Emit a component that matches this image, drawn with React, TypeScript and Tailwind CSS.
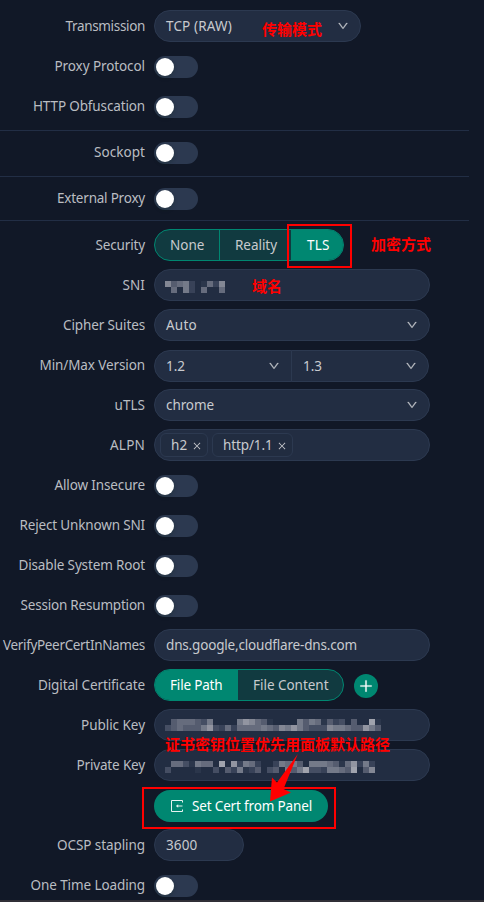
import { useLayoutEffect, useRef, useState, type ReactNode } from "react";
import { AiOutlineClose, AiOutlineDown, AiOutlinePlus } from "react-icons/ai";

/* Text set to a known advance width by spreading the difference over its letters. */
function Fit({ text, width }: { text: string; width: number }) {
  const ref = useRef<HTMLSpanElement>(null);
  const [spacing, setSpacing] = useState(0);
  useLayoutEffect(() => {
    if (ref.current) {
      const natural = ref.current.getBoundingClientRect().width - spacing * text.length;
      setSpacing((width - natural) / text.length);
    }
  }, [text, width]);
  return (
    <span ref={ref} className="inline-block whitespace-nowrap" style={{ letterSpacing: spacing }}>
      {text}
    </span>
  );
}

function Row({ label, width, children }: { label?: string; width?: number; children: ReactNode }) {
  return (
    <div className="flex h-10 shrink-0 items-center">
      <div className="mr-[9px] flex w-[145px] shrink-0 justify-end text-[#babdc2]">
        {label && <Fit text={label} width={width ?? 0} />}
      </div>
      {children}
    </div>
  );
}

const Switch = () => (
  <div className="mt-0.5 flex h-[22px] w-11 items-center rounded-full bg-[#2c3950] pl-0.5">
    <div className="size-[18px] rounded-full bg-white shadow-[0_2px_4px_rgba(0,35,11,0.2)]" />
  </div>
);

const SwitchRow = ({ label, width }: { label: string; width: number }) => (
  <Row label={label} width={width}>
    <Switch />
  </Row>
);

const Divider = ({ className }: { className: string }) => (
  <div className={`h-px w-[469px] shrink-0 bg-[#222e45] ${className}`} />
);

function Box({ className = "w-[276px] rounded-full", children }: { className?: string; children?: ReactNode }) {
  return (
    <div className={`flex h-8 shrink-0 items-center border border-[#2c3950] bg-[#222d42] px-[11px] ${className}`}>
      {children}
    </div>
  );
}

const Down = () => <AiOutlineDown size={12} strokeWidth={25} className="ml-auto text-[#bdc0c6]" />;

/* Panel open on its right side with an arrow entering it. */
const ImportIcon = () => (
  <svg width="12" height="12" viewBox="0 0 12 12" fill="none" stroke="currentColor" className="mr-[9px] opacity-90">
    <path d="M11.5 2.5V0.5H0.5V11.5H11.5V9.5" />
    <path d="M11.5 6H6" />
    <path d="M7.2 4.2V7.8L4.8 6Z" fill="currentColor" stroke="none" />
  </svg>
);

const Tag = ({ text, width, className }: { text: string; width: number; className: string }) => (
  <div className={`flex h-6 shrink-0 items-center rounded-md border border-[#2c3950] bg-[#212c40] pl-2.5 ${className}`}>
    <Fit text={text} width={width} />
    <AiOutlineClose size={10} className="ml-[4px] mt-0.5" />
  </div>
);

const tones = [
  "none", "#2b364b", "#384258", "#454e63", "#555c6f", "#666c7d", "#747a89", "#838794", "#9295a1", "#a0a3ad",
];

function Mosaic({ rows, className }: { rows: string[]; className: string }) {
  return (
    <svg width={rows[0].length * 6} height="12" className={`-ml-px shrink-0 ${className}`} shapeRendering="crispEdges">
      {rows.map((row, y) =>
        row.split("").map((tone, x) => (
          <rect key={`${x}-${y}`} x={x * 6} y={y * 6} width="6" height="6" fill={tones[Number(tone)]} />
        )),
      )}
    </svg>
  );
}

const red = "absolute whitespace-nowrap text-[15px] leading-5 font-bold text-[#ff0000] font-['Noto_Sans_CJK_SC',sans-serif]";

export default function App() {
  return (
    <div className="relative flex h-[902px] w-[484px] flex-col overflow-hidden bg-[#111827] pt-1.5 font-['Noto_Sans','Noto_Sans_CJK_SC',sans-serif] text-[13.5px] leading-5 text-[#c8cace]">
      <Row label="Transmission" width={79.5}>
        <Box className="w-[207px] rounded-full">
          <Fit text="TCP (RAW)" width={66} />
          <Down />
        </Box>
      </Row>
      <SwitchRow label="Proxy Protocol" width={90.5} />
      <SwitchRow label="HTTP Obfuscation" width={112} />
      <Divider className="mt-1 mb-px" />
      <SwitchRow label="Sockopt" width={51} />
      <Divider className="mt-1 mb-px" />
      <SwitchRow label="External Proxy" width={88} />
      <Divider className="mt-0.5 mb-1" />

      <Row label="Security" width={49.5}>
        <div className="flex h-8 w-[190px] overflow-hidden rounded-full border border-[#008771] bg-[#113a40]">
          <div className="flex w-[65px] items-center border-r border-[#008771] pl-[15px]">
            <Fit text="None" width={34.5} />
          </div>
          <div className="flex w-[71px] items-center pl-[15px]">
            <Fit text="Reality" width={42} />
          </div>
          <div className="flex flex-1 items-center bg-[#008771] pl-4 text-white">
            <Fit text="TLS" width={22.5} />
          </div>
        </div>
      </Row>
      <Row label="SNI" width={22.5}>
        <Box>
          <Mosaic className="mt-1" rows={["7456201527", "0506205005"]} />
        </Box>
      </Row>
      <Row label="Cipher Suites" width={82}>
        <Box>
          <Fit text="Auto" width={31} />
          <Down />
        </Box>
      </Row>
      <Row label="Min/Max Version" width={105.5}>
        <div className="mt-0.5 flex">
          <Box className="w-[138px] rounded-l-full">
            <Fit text="1.2" width={19} />
            <Down />
          </Box>
          <Box className="-ml-px w-[138px] rounded-r-full">
            <Fit text="1.3" width={19} />
            <Down />
          </Box>
        </div>
      </Row>
      <Row label="uTLS" width={30.5}>
        <Box>
          <Fit text="chrome" width={48} />
          <Down />
        </Box>
      </Row>
      <Row label="ALPN" width={35}>
        <div className="flex h-8 w-[276px] items-center gap-1 rounded-full border border-[#2c3950] bg-[#222d42] pl-[5px]">
          <Tag text="h2" width={16.5} className="w-12" />
          <Tag text="http/1.1" width={49.5} className="w-[81px]" />
        </div>
      </Row>
      <SwitchRow label="Allow Insecure" width={90.5} />
      <SwitchRow label="Reject Unknown SNI" width={125.5} />
      <SwitchRow label="Disable System Root" width={126.5} />
      <SwitchRow label="Session Resumption" width={124.5} />
      <Row label="VerifyPeerCertInNames" width={142}>
        <Box>
          <Fit text="dns.google,cloudflare-dns.com" width={191} />
        </Box>
      </Row>
      <Row label="Digital Certificate" width={107}>
        <div className="flex h-8 w-[190px] overflow-hidden rounded-full border border-[#008771] bg-[#113a40]">
          <div className="flex w-[83px] items-center bg-[#008771] pl-[15px] text-white">
            <Fit text="File Path" width={52.5} />
          </div>
          <div className="flex flex-1 items-center pl-[15px]">
            <Fit text="File Content" width={75.5} />
          </div>
        </div>
        <div className="mt-0.5 ml-2.5 flex size-6 items-center justify-center rounded-full bg-[#008771] text-white">
          <AiOutlinePlus size={16} strokeWidth={20} />
        </div>
      </Row>
      <Row label="Public Key" width={64}>
        <Box>
          <Mosaic
            className="mt-0"
            rows={["045554360000687541000064651423040091", "345444683252555565476864333766544864"]}
          />
        </Box>
      </Row>
      <Row label="Private Key" width={68.5}>
        <Box>
          <Mosaic
            className="mt-1"
            rows={["055316550908265200265640666541582620", "300001003042612403406469332665490470"]}
          />
        </Box>
      </Row>
      <Row>
        <div className="mt-0.5 flex h-8 w-[174px] items-center rounded-full bg-[#008771] pl-[17px] text-white">
          <ImportIcon />
          <Fit text="Set Cert from Panel" width={120} />
        </div>
      </Row>
      <Row label="OCSP stapling" width={88}>
        <Box className="w-[90px] rounded-full">
          <Fit text="3600" width={31.5} />
        </Box>
      </Row>
      <SwitchRow label="One Time Loading" width={114.5} />
      <div className="absolute inset-x-0 bottom-0 h-0.5 bg-[#302f36]" />

      {/* Annotations drawn over the form */}
      <span className={`${red} top-[19px] left-[262px]`}>传输模式</span>
      <span className={`${red} top-[234px] left-[371px]`}>加密方式</span>
      <span className={`${red} top-[276px] left-[252px]`}>域名</span>
      <span className={`${red} top-[734px] left-[165px]`}>证书密钥位置优先用面板默认路径</span>
      <div className="absolute top-[224px] left-[287px] h-11 w-[65px] border-2 border-[#ff0000]" />
      <div className="absolute top-[787px] left-[142px] h-[42px] w-[194px] border-2 border-[#ff0000]" />
      <svg className="absolute top-[750px] left-[265px]" width="40" height="55" viewBox="265 750 40 55">
        <path d="M297.8 754 L277 782.5 L272 777.5 L270 801.5 L291 792.5 L283.5 789 Z" fill="#ff0000" />
      </svg>
    </div>
  );
}
